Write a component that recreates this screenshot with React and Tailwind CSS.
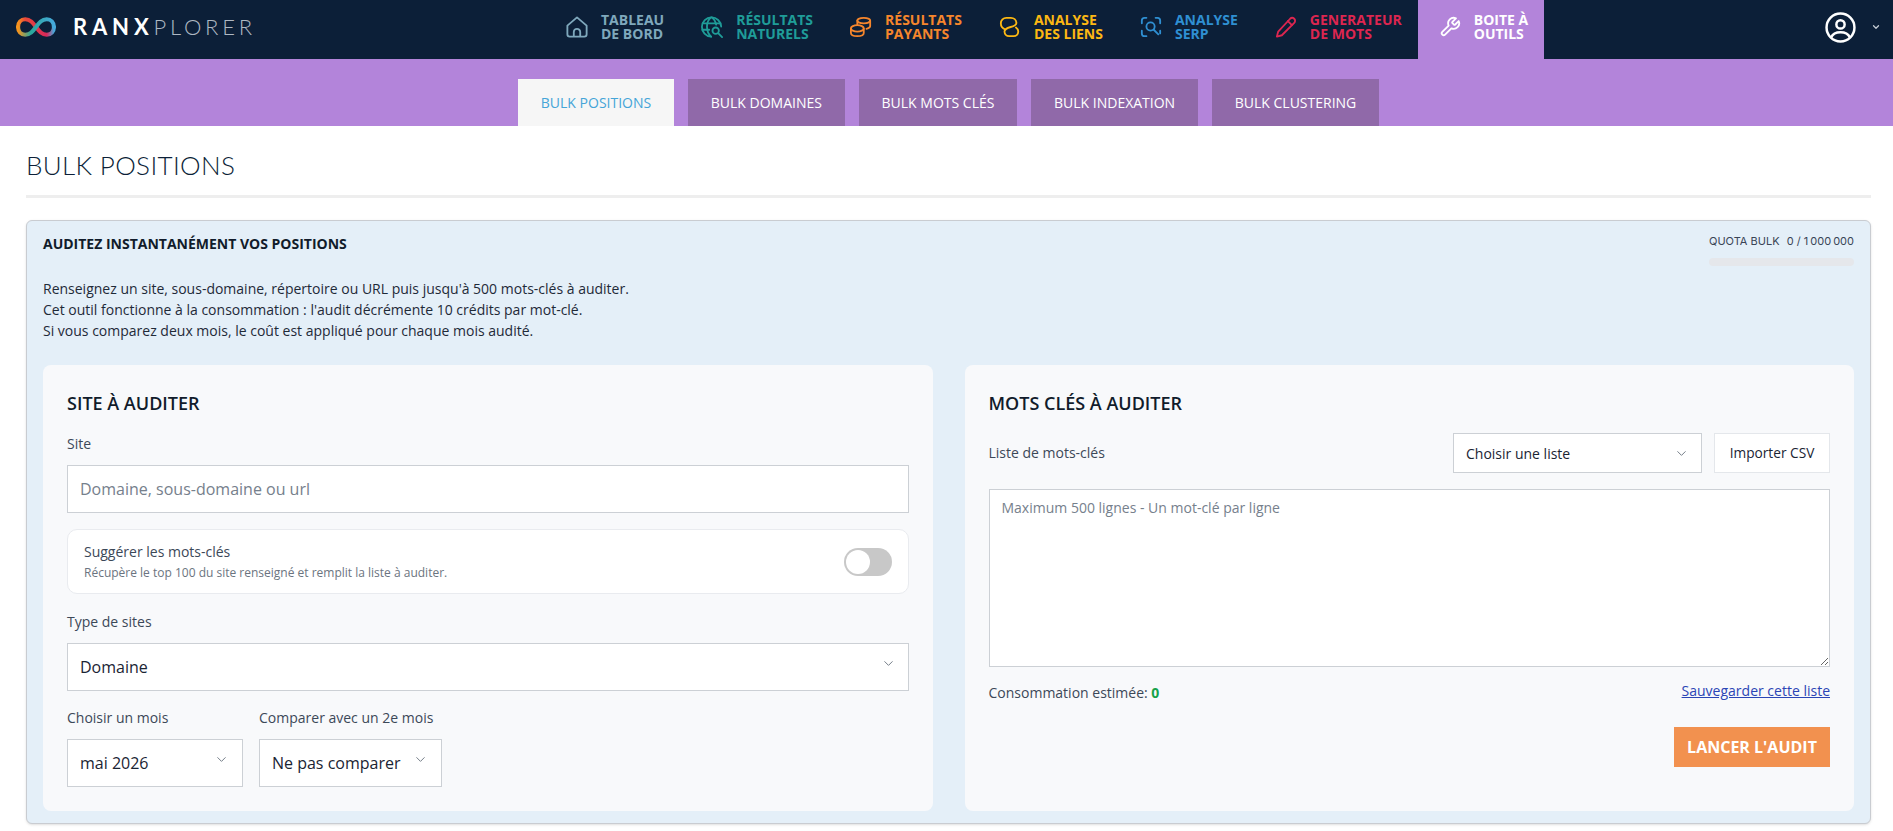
import { ChevronDown } from "lucide-react";

const navItems = [
    { top: "TABLEAU", bottom: "DE BORD", color: "text-[#7fa8bc]", icon: "home" },
    { top: "RÉSULTATS", bottom: "NATURELS", color: "text-[#1f9c98]", icon: "globe" },
    { top: "RÉSULTATS", bottom: "PAYANTS", color: "text-[#f6862c]", icon: "coins" },
    { top: "ANALYSE", bottom: "DES LIENS", color: "text-[#fdb813]", icon: "link" },
    { top: "ANALYSE", bottom: "SERP", color: "text-[#2f8fd2]", icon: "serp" },
    { top: "GENERATEUR", bottom: "DE MOTS", color: "text-[#dd2650]", icon: "pencil" },
];

const subTabs = ["BULK DOMAINES", "BULK MOTS CLÉS", "BULK INDEXATION", "BULK CLUSTERING"];

const NavIcon = ({ name }) => {
    return (
        <svg className="w-[22px] h-[22px] shrink-0" viewBox="0 0 24 24" fill="none" stroke="currentColor" strokeWidth={2} strokeLinecap="round" strokeLinejoin="round">
            {name === "home" && (
                <>
                    <path d="M1.5 10.5 12 1.5l10.5 9V20a2.500 2.500 0 0 1-2.500 2.500H4A2.500 2.500 0 0 1 1.500 20z" />
                    <path d="M8.500 22v-4.500a3.500 3.500 0 0 1 7 0V22" />
                </>
            )}
            {name === "globe" && (
                <>
                    <path d="M11 22.500a10.500 10.500 0 1 1 11-11" />
                    <path d="M11 1.500c-6 5-6 15 0 21M12 1.500c2.500 2 4 5 4.500 8" />
                    <path d="M2 8h19M1.500 15H9" />
                    <circle cx="16" cy="16" r="3.500" />
                    <path d="m19 19 4 4" />
                </>
            )}
            {name === "coins" && (
                <>
                    <ellipse cx="8" cy="13.500" rx="7" ry="3.500" />
                    <path d="M1 13.500v5C1 20.500 4 22 8 22s7-1.500 7-3.500v-5" />
                    <ellipse cx="15" cy="5" rx="7" ry="3" />
                    <path d="M8 5v4M22 5v6c0 1.500-1.500 2.500-4 3" />
                </>
            )}
            {name === "link" && (
                <path d="M6.500 14.500C3.500 13.500 2 11 2 8a6 6 0 0 1 6-6h5a6 6 0 0 1 6 5.500c0 5.500-13 3.500-13 9.500a5 5 0 0 0 5 5h5a5 5 0 0 0 5-5c0-2-1-3.500-2.500-4.500" />
            )}
            {name === "serp" && (
                <>
                    <path d="M2 8V5a3 3 0 0 1 3-3h2M17 2h2a3 3 0 0 1 3 3v3M2 16v3a3 3 0 0 0 3 3h2M22 16v3" />
                    <circle cx="11.500" cy="11.500" r="4.500" />
                    <path d="m15 15 5 5" />
                </>
            )}
            {name === "pencil" && (
                <>
                    <path d="M16.500 3a2.800 2.800 0 0 1 4.500 4.500L7.500 21 2 22.500 3.500 17z" />
                    <path d="m14 5.500 4.500 4.500" />
                </>
            )}
            {name === "wrench" && (
                <path d="M14.700 6.300a1 1 0 0 0 0 1.400l1.600 1.600a1 1 0 0 0 1.400 0l3.770-3.770a6 6 0 0 1-7.940 7.940l-6.910 6.910a2.120 2.120 0 0 1-3-3l6.910-6.910a6 6 0 0 1 7.940-7.940z" />
            )}
        </svg>
    );
};

const NavItem = ({ item }) => {
    return (
        <a className={`flex items-center h-full pl-[21px] pr-[16px] pb-[5px] gap-[13px] ${item.color}`}>
            <NavIcon name={item.icon} />
            <span className="text-[14px] leading-[14px] font-bold whitespace-nowrap">
                {item.top}
                <br />
                {item.bottom}
            </span>
        </a>
    );
};

const Select = ({ value, className }) => {
    return (
        <div className={`flex justify-between bg-white border border-[#ccd0d5] text-[#1a2433] ${className}`}>
            <span className="self-center whitespace-nowrap">{value}</span>
            <ChevronDown className="w-[15px] h-[15px] mt-[12px] shrink-0 text-[#6b7480]" strokeWidth={1.5} />
        </div>
    );
};

const Label = ({ children, className = "" }) => {
    return <div className={`text-[14px] leading-[20px] text-[#3c4858] ${className}`}>{children}</div>;
};

export default function App() {
    return (
        <div className="h-[831px] overflow-hidden bg-white font-['Open_Sans',sans-serif] text-[#1a2433]">
            <header className="flex h-[59px] bg-[#0c1f38] text-white">
                <div className="w-[545px] shrink-0 flex items-center pl-[15px] pb-[5px]">
                    <svg className="w-[42px] h-[22px]" viewBox="0 0 41 21" fill="none" strokeWidth={4} strokeLinecap="round">
                        <defs>
                            <linearGradient id="lg1" x1="0" y1="0" x2="1" y2="0">
                                <stop offset="0" stopColor="#f7941d" />
                                <stop offset="0.35" stopColor="#2aa79b" />
                                <stop offset="1" stopColor="#46a9dc" />
                            </linearGradient>
                            <linearGradient id="lg2" x1="0" y1="0" x2="1" y2="0">
                                <stop offset="0" stopColor="#f7941d" />
                                <stop offset="0.2" stopColor="#e8483a" />
                                <stop offset="0.8" stopColor="#d8285a" />
                                <stop offset="1" stopColor="#46a9dc" />
                            </linearGradient>
                        </defs>
                        <path d="M3 10.500C3 6 6 3 10 3c5 0 7.500 3.500 10.500 7.500S26 18 31 18c4 0 7-3 7-7.500" stroke="url(#lg2)" />
                        <path d="M3 10.500c0 4.500 3 7.500 7 7.500 5 0 7.500-3.500 10.500-7.500S26 3 31 3c4 0 7 3 7 7.500" stroke="url(#lg1)" />
                    </svg>
                    <span className="ml-[16px] text-[22px] leading-none font-['Lato',sans-serif] tracking-[0.22em] font-bold">RANX</span>
                    <span className="text-[22px] leading-none font-['Lato',sans-serif] tracking-[0.17em] font-light text-[#aeb8c3]">PLORER</span>
                </div>
                {navItems.map((item) => (
                    <NavItem key={item.icon} item={item} />
                ))}
                <a className="flex items-center h-full pl-[21px] pr-[16px] pb-[5px] gap-[13px] bg-[#b384da] text-white">
                    <NavIcon name="wrench" />
                    <span className="text-[14px] leading-[14px] font-bold whitespace-nowrap">
                        BOITE À
                        <br />
                        OUTILS
                    </span>
                </a>
                <div className="flex-1 flex items-center justify-end pr-[12px] pb-[5px]">
                    <svg className="w-[31px] h-[31px]" viewBox="0 0 30 30" fill="none" stroke="currentColor" strokeWidth={2.4}>
                        <circle cx="15" cy="15" r="13.500" />
                        <circle cx="15" cy="12" r="4" />
                        <path d="M6 24.500c1.500-3.500 5-5 9-5s7.500 1.500 9 5" />
                    </svg>
                    <ChevronDown className="w-[10px] h-[10px] ml-[15px] text-[#c5ccd4]" strokeWidth={3} />
                </div>
            </header>

            <nav className="flex h-[67px] items-end gap-[14px] bg-[#b384da] pl-[518px]">
                <a className="flex items-center h-[47px] w-[156px] justify-center bg-[#f6f6f6] text-[14px] text-[#45a5d8]">BULK POSITIONS</a>
                {subTabs.map((tab) => (
                    <a key={tab} className="flex items-center h-[47px] px-[22.8px] bg-[#9069a9] text-[14px] text-white whitespace-nowrap">
                        {tab}
                    </a>
                ))}
            </nav>

            <main className="px-[26px] pr-[22px]">
                <h1 className="h-[72px] border-b-[3px] border-[#eeeeee] pt-[24px] text-[26px] tracking-[0.35px] leading-[30px] font-['Lato',sans-serif] font-light text-[#0c1f38]">BULK POSITIONS</h1>

                <section className="mt-[22px] h-[604px] rounded-[6px] border border-[#c9ccd1] bg-[#e4eff8] px-[16px] shadow-sm">
                    <div className="flex justify-between h-[144px]">
                        <div>
                            <h2 className="mt-[14px] text-[14px] leading-[18px] font-bold text-[#111c2b]">AUDITEZ INSTANTANÉMENT VOS POSITIONS</h2>
                            <p className="mt-[25px] text-[14px] leading-[21px] text-[#1f2a38]">
                                Renseignez un site, sous-domaine, répertoire ou URL puis jusqu'à 500 mots-clés à auditer.
                                <br />
                                Cet outil fonctionne à la consommation : l'audit décrémente 10 crédits par mot-clé.
                                <br />
                                Si vous comparez deux mois, le coût est appliqué pour chaque mois audité.
                            </p>
                        </div>
                        <div className="w-[145px] pt-[13px] font-['Inter',sans-serif]">
                            <div className="flex justify-between text-[11px] leading-[14px] text-[#3a4556]">
                                <span>QUOTA BULK</span>
                                <span className="tracking-[-0.5px]">0 / 1{"\u202f"}000{"\u202f"}000</span>
                            </div>
                            <div className="mt-[10px] h-[8px] rounded-full bg-[#e5e7eb]" />
                        </div>
                    </div>

                    <div className="grid grid-cols-2 gap-[32px]">
                        <div className="h-[446px] rounded-[8px] bg-[#f8f9fb] px-[24px] pt-[24px]">
                            <h3 className="text-[18px] leading-[28px] font-semibold text-[#111c2b]">SITE À AUDITER</h3>
                            <Label className="mt-[17px]">Site</Label>
                            <div className="mt-[11px] flex items-center h-[48px] px-[12px] bg-white border border-[#ccd0d5] text-[16px] text-[#76808c]">Domaine, sous-domaine ou url</div>
                            <div className="mt-[16px] flex items-center justify-between h-[65px] rounded-[10px] border border-[#e9ebef] bg-white pl-[16px] pr-[16px]">
                                <div>
                                    <div className="text-[14px] leading-[20px] text-[#3c4858]">Suggérer les mots-clés</div>
                                    <div className="mt-[3px] text-[12px] leading-[16px] text-[#6b7480]">Récupère le top 100 du site renseigné et remplit la liste à auditer.</div>
                                </div>
                                <div className="flex items-center h-[28px] w-[48px] rounded-full bg-[#c8c8c8] pl-[2px]">
                                    <div className="h-[24px] w-[24px] rounded-full bg-white" />
                                </div>
                            </div>
                            <Label className="mt-[18px]">Type de sites</Label>
                            <Select value="Domaine" className="mt-[11px] h-[48px] pl-[12px] pr-[12px] text-[16px]" />
                            <div className="mt-[17px] flex gap-[16px]">
                                <div>
                                    <Label>Choisir un mois</Label>
                                    <Select value="mai 2026" className="mt-[11px] w-[176px] h-[48px] pl-[12px] pr-[13px] text-[16px]" />
                                </div>
                                <div>
                                    <Label>Comparer avec un 2e mois</Label>
                                    <Select value="Ne pas comparer" className="mt-[11px] w-[183px] h-[48px] pl-[12px] pr-[13px] text-[16px]" />
                                </div>
                            </div>
                        </div>

                        <div className="h-[446px] rounded-[8px] bg-[#f8f9fb] px-[24px] pt-[24px]">
                            <h3 className="text-[18px] leading-[28px] font-semibold text-[#111c2b]">MOTS CLÉS À AUDITER</h3>
                            <div className="mt-[16px] flex items-center h-[40px]">
                                <Label className="flex-1">Liste de mots-clés</Label>
                                <Select value="Choisir une liste" className="w-[249px] h-[40px] pl-[12px] pr-[12px] text-[14px]" />
                                <button className="ml-[12px] h-[40px] w-[116px] bg-white border border-[#e4e7eb] text-[13.7px] text-[#1a2433]">Importer CSV</button>
                            </div>
                            <textarea
                                className="mt-[16px] block w-full h-[178px] bg-white border border-[#ccd0d5] px-[12px] py-[8px] text-[14px] leading-[20px] placeholder-[#76808c]"
                                placeholder="Maximum 500 lignes - Un mot-clé par ligne"
                            />
                            <div className="mt-[14px] flex justify-between">
                                <div className="text-[14px] leading-[20px] pt-[2px] text-[#3c4858]">
                                    Consommation estimée: <b className="text-[#17a24a]">0</b>
                                </div>
                                <a href="#" className="text-[14px] leading-[20px] text-[#2b45b5] underline">Sauvegarder cette liste</a>
                            </div>
                            <div className="mt-[24px] flex justify-end">
                                <button className="h-[40px] w-[156px] bg-[#f2914f] text-[16px] font-bold text-white">LANCER L'AUDIT</button>
                            </div>
                        </div>
                    </div>
                </section>
            </main>
        </div>
    );
}
